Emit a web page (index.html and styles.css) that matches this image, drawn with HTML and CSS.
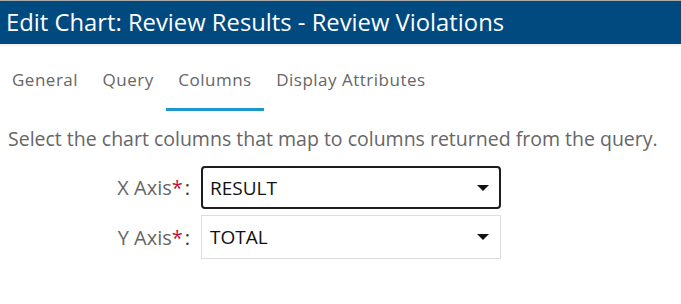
FILE: index.html
```html
<!DOCTYPE html>
<html lang="en">
<head>
<meta charset="UTF-8">
<title>Edit Chart</title>
<link rel="stylesheet" href="styles.css">
</head>
<body>
<div class="dialog">
    <div class="dialog-header">
        <h1>Edit Chart: Review Results - Review Violations</h1>
    </div>

    <ul class="tabs">
        <li class="tab">General</li>
        <li class="tab">Query</li>
        <li class="tab active">Columns</li>
        <li class="tab">Display Attributes</li>
    </ul>

    <p class="intro">Select the chart columns that map to columns returned from the query.</p>

    <div class="form">
        <div class="row">
            <label class="field-label">X Axis<span class="req">*</span><span class="colon">:</span></label>
            <div class="select focused">
                <span class="value">RESULT</span>
                <span class="caret"></span>
            </div>
        </div>
        <div class="row">
            <label class="field-label">Y Axis<span class="req">*</span><span class="colon">:</span></label>
            <div class="select">
                <span class="value">TOTAL</span>
                <span class="caret"></span>
            </div>
        </div>
    </div>
</div>
</body>
</html>
```

FILE: styles.css
```css
body {
    margin: 0;
    padding: 0;
    background-color: #fff;
    font-family: 'Open Sans', 'Noto Sans', sans-serif;
}

.dialog {
    border-top: 1px solid #a9a9a9;
}

.dialog-header {
    background-color: #004a80;
    height: 43px;
    padding: 0 6px;
    display: flex;
    align-items: center;
    border-bottom: 2px solid #f2f4f6;
}

.dialog-header h1 {
    margin: 0;
    color: #fff;
    font-size: 23.8px;
    font-weight: 400;
    line-height: 1;
}

.tabs {
    list-style: none;
    margin: 18px 0 0 0;
    padding: 0;
    display: flex;
}

.tab {
    padding: 4px 12.5px 17px 12px;
    color: #666;
    font-size: 17px;
    letter-spacing: 0.5px;
    border-bottom: 3px solid transparent;
}

.tab.active {
    border-bottom-color: #1a96d0;
}

.intro {
    margin: 14px 0 0 8px;
    color: #666;
    font-size: 19.5px;
}

.form {
    margin-top: 14px;
}

.row {
    display: flex;
    align-items: center;
    margin-bottom: 6px;
}

.field-label {
    width: 201px;
    text-align: right;
    padding-right: 11px;
    box-sizing: border-box;
    color: #666;
    font-size: 20px;
}

.req {
    color: #c0103c;
}

.colon {
    color: #333;
    margin-left: 2px;
}

.select {
    width: 300px;
    height: 44px;
    box-sizing: border-box;
    border: 1px solid #dcdcdc;
    display: flex;
    align-items: center;
    justify-content: space-between;
    padding: 0 11px 0 8px;
}

.select.focused {
    height: 43px;
    border: 2px solid #1c1c1c;
    border-radius: 4px;
    padding: 0 10px 0 7px;
}

.value {
    color: #111;
    font-size: 19px;
}

.caret {
    width: 0;
    height: 0;
    border-left: 6px solid transparent;
    border-right: 6px solid transparent;
    border-top: 6px solid #111;
}
```
